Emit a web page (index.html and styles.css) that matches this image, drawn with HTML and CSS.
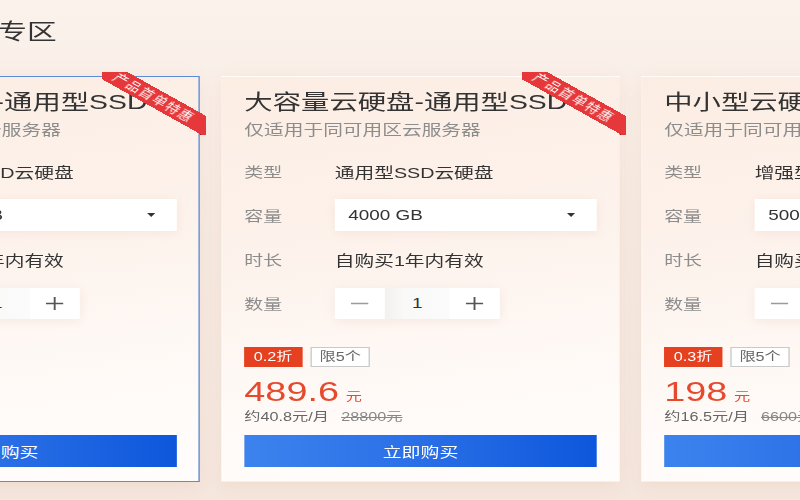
FILE: index.html
```html
<!DOCTYPE html>
<html lang="zh-CN">
<head>
  <meta charset="UTF-8" />
  <meta name="viewport" content="width=device-width, initial-scale=1" />
  <title>云硬盘专区</title>
  <link rel="stylesheet" href="styles.css">
</head>
<body>
  <main class="stage">
    <h2 class="zone-title">云硬盘专区</h2>

    <section class="track">
      <article class="card card-active">
        <div class="ribbon"><span>产品首单特惠</span></div>
        <h3 class="card-title">大容量云硬盘-通用型SSD</h3>
        <p class="card-desc">仅适用于同可用区云服务器</p>
        <div class="specs">
          <div class="spec"><span class="spec-label">类型</span><span class="spec-value">通用型SSD云硬盘</span></div>
          <div class="spec"><span class="spec-label">容量</span><div class="select">2000 GB<i class="caret"></i></div></div>
          <div class="spec"><span class="spec-label">时长</span><span class="spec-value">自购买1年内有效</span></div>
          <div class="spec"><span class="spec-label">数量</span>
            <div class="stepper">
              <button class="step-btn" aria-label="减少"><svg width="13" height="13" viewBox="0 0 13 13"><path d="M0 6.5h13" stroke="#9a9a9a" stroke-width="1.3"/></svg></button>
              <span class="step-val">1</span>
              <button class="step-btn" aria-label="增加"><svg width="13" height="13" viewBox="0 0 13 13"><path d="M0 6.5h13M6.5 0v13" stroke="#555" stroke-width="1.4"/></svg></button>
            </div>
          </div>
        </div>
        <div class="tags"><span class="tag tag-off">0.2折</span><span class="tag tag-limit">限5个</span></div>
        <div class="price">249.6<small>元</small></div>
        <div class="price-note">约20.8元/月<s>14400元</s></div>
        <button class="buy">立即购买</button>
      </article>

      <article class="card">
        <div class="ribbon"><span>产品首单特惠</span></div>
        <h3 class="card-title">大容量云硬盘-通用型SSD</h3>
        <p class="card-desc">仅适用于同可用区云服务器</p>
        <div class="specs">
          <div class="spec"><span class="spec-label">类型</span><span class="spec-value">通用型SSD云硬盘</span></div>
          <div class="spec"><span class="spec-label">容量</span><div class="select">4000 GB<i class="caret"></i></div></div>
          <div class="spec"><span class="spec-label">时长</span><span class="spec-value">自购买1年内有效</span></div>
          <div class="spec"><span class="spec-label">数量</span>
            <div class="stepper">
              <button class="step-btn" aria-label="减少"><svg width="13" height="13" viewBox="0 0 13 13"><path d="M0 6.5h13" stroke="#9a9a9a" stroke-width="1.3"/></svg></button>
              <span class="step-val">1</span>
              <button class="step-btn" aria-label="增加"><svg width="13" height="13" viewBox="0 0 13 13"><path d="M0 6.5h13M6.5 0v13" stroke="#555" stroke-width="1.4"/></svg></button>
            </div>
          </div>
        </div>
        <div class="tags"><span class="tag tag-off">0.2折</span><span class="tag tag-limit">限5个</span></div>
        <div class="price">489.6<small>元</small></div>
        <div class="price-note">约40.8元/月<s>28800元</s></div>
        <button class="buy">立即购买</button>
      </article>

      <article class="card">
        <div class="ribbon"><span>产品首单特惠</span></div>
        <h3 class="card-title">中小型云硬盘-增强型SSD</h3>
        <p class="card-desc">仅适用于同可用区云服务器</p>
        <div class="specs">
          <div class="spec"><span class="spec-label">类型</span><span class="spec-value">增强型SSD云硬盘</span></div>
          <div class="spec"><span class="spec-label">容量</span><div class="select">500 GB<i class="caret"></i></div></div>
          <div class="spec"><span class="spec-label">时长</span><span class="spec-value">自购买1年内有效</span></div>
          <div class="spec"><span class="spec-label">数量</span>
            <div class="stepper">
              <button class="step-btn" aria-label="减少"><svg width="13" height="13" viewBox="0 0 13 13"><path d="M0 6.5h13" stroke="#9a9a9a" stroke-width="1.3"/></svg></button>
              <span class="step-val">1</span>
              <button class="step-btn" aria-label="增加"><svg width="13" height="13" viewBox="0 0 13 13"><path d="M0 6.5h13M6.5 0v13" stroke="#555" stroke-width="1.4"/></svg></button>
            </div>
          </div>
        </div>
        <div class="tags"><span class="tag tag-off">0.3折</span><span class="tag tag-limit">限5个</span></div>
        <div class="price">198<small>元</small></div>
        <div class="price-note">约16.5元/月<s>6600元</s></div>
        <button class="buy">立即购买</button>
      </article>
    </section>
  </main>
</body>
</html>
```

FILE: styles.css
```css
:root {
  --text-dark: #333333;
  --text-gray: #8c8c8c;
  --red: #e5401f;
  --price: #e64a2e;
  --blue-light: #3d83ee;
  --blue-dark: #0d57dc;
  --font-family: "Liberation Sans", "Noto Sans CJK SC", sans-serif;
}

html, body {
  margin: 0;
  height: 100%;
  overflow: hidden;
}

body {
  font-family: var(--font-family);
  color: var(--text-dark);
  background: linear-gradient(180deg, #fbf2ec 0%, #f7ebe3 40%, #f5e7de 100%);
}

/* the screenshot is a horizontally stretched view of the zone */
.stage {
  width: 593px;
  height: 500px;
  transform: scaleX(1.35);
  transform-origin: 0 0;
}

.zone-title {
  margin: 17px 0 29px -68px;
  font-size: 22px;
  line-height: 30px;
  font-weight: 400;
  color: #333;
}

.track {
  display: flex;
  gap: 16px;
  margin-left: -147px;
}

.card {
  position: relative;
  flex: 0 0 295px;
  height: 406px;
  box-sizing: border-box;
  padding: 13px 16px 14px;
  border: 1px solid transparent;
  background: linear-gradient(170deg, #fcede3 0%, #fdf3ed 45%, #fffaf7 75%, #fffdfc 100%);
  box-shadow: 0 4px 14px rgba(214, 168, 140, 0.18);
  display: flex;
  flex-direction: column;
}

.card > * {
  flex-shrink: 0;
}

.card-active {
  border-color: #5b8cd9;
}

.ribbon {
  position: absolute;
  top: -5px;
  right: -5px;
  width: 76px;
  height: 63px;
  overflow: hidden;
  z-index: 1;
}

.ribbon::before,
.ribbon::after {
  content: "";
  position: absolute;
  background: #a6181c;
}

.ribbon::before {
  top: 0;
  left: 0;
  width: 9px;
  height: 5px;
}

.ribbon::after {
  bottom: 0;
  right: 0;
  width: 4px;
  height: 10px;
}

.ribbon span {
  position: absolute;
  top: 17px;
  left: -18px;
  width: 112px;
  height: 17px;
  line-height: 17px;
  background: #e6383a;
  color: #fff;
  font-size: 11px;
  letter-spacing: 1px;
  text-align: center;
  transform: rotate(37deg);
  z-index: 2;
}

.card-title {
  margin: 0;
  font-size: 21px;
  line-height: 24px;
  font-weight: 400;
  color: var(--text-dark);
  white-space: nowrap;
}

.card-desc {
  margin: 6px 0 0;
  font-size: 14.6px;
  line-height: 20px;
  color: var(--text-gray);
}

.specs {
  margin-top: 15px;
  display: flex;
  flex-direction: column;
  gap: 12px;
}

.spec {
  display: flex;
  align-items: center;
  height: 32px;
  font-size: 14px;
}

.spec-label {
  flex: 0 0 67px;
  color: var(--text-gray);
}

.spec-value {
  font-size: 14.6px;
  color: var(--text-dark);
}

.select {
  flex: 1;
  height: 32px;
  box-sizing: border-box;
  padding: 0 10px;
  display: flex;
  align-items: center;
  justify-content: space-between;
  background: #fff;
  color: var(--text-dark);
  box-shadow: 0 2px 8px rgba(210, 170, 150, 0.18);
}

.caret {
  width: 0;
  height: 0;
  margin-right: 6px;
  border-left: 3px solid transparent;
  border-right: 3px solid transparent;
  border-top: 4px solid #333;
}

.stepper {
  display: flex;
  height: 31px;
  box-shadow: 0 2px 8px rgba(210, 170, 150, 0.18);
}

.step-btn {
  width: 37px;
  height: 31px;
  padding: 0;
  border: none;
  background: #fff;
  display: flex;
  align-items: center;
  justify-content: center;
  cursor: pointer;
}

.step-val {
  width: 48px;
  display: flex;
  align-items: center;
  justify-content: center;
  background: linear-gradient(90deg, #f3f0ee 0%, #faf9f8 30%, #fbfbfb 100%);
  font-size: 14px;
  color: var(--text-dark);
}

.tags {
  margin-top: 28px;
  display: flex;
  gap: 6px;
}

.tag {
  height: 20px;
  line-height: 18px;
  box-sizing: border-box;
  padding: 0 6px;
  font-size: 12px;
  border: 1px solid transparent;
}

.tag-off {
  background: var(--red);
  border-color: var(--red);
  color: #fff;
}

.tag-limit {
  border-color: #c9c9c9;
  color: #666;
  background: #fff;
}

.price {
  margin-top: 10px;
  height: 30px;
  font-size: 28px;
  line-height: 30px;
  color: var(--price);
}

.price small {
  margin-left: 5px;
  font-size: 12px;
  line-height: 1;
}

.price-note {
  margin-top: 2px;
  font-size: 12px;
  line-height: 16px;
  color: #666;
}

.price-note s {
  margin-left: 9px;
  color: #888;
}

.buy {
  margin-top: 10px;
  height: 32px;
  border: none;
  background: linear-gradient(90deg, var(--blue-light) 0%, #2a6fe6 50%, var(--blue-dark) 100%);
  color: #fff;
  font-family: var(--font-family);
  font-size: 14px;
  cursor: pointer;
}
```
